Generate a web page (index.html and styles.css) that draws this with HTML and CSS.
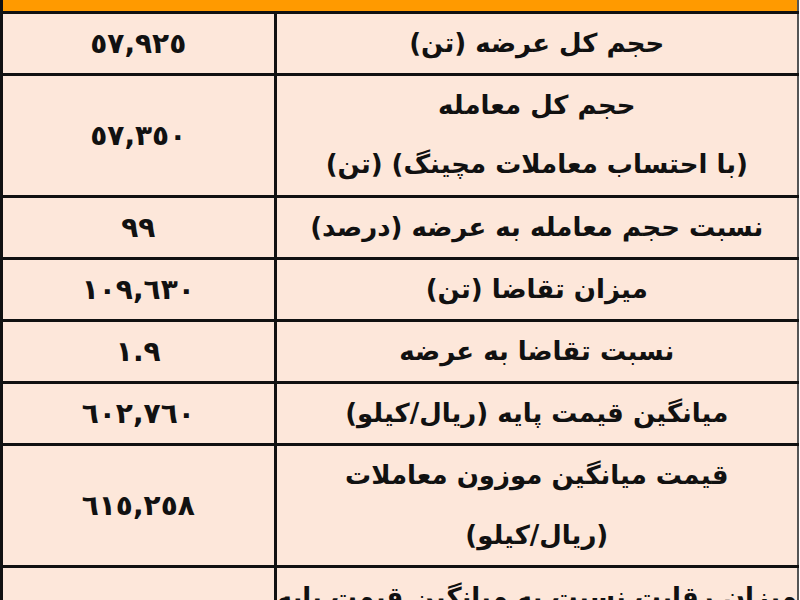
FILE: index.html
```html
<!DOCTYPE html>
<html lang="fa">
<head>
<meta charset="utf-8">
<link rel="stylesheet" href="styles.css">
</head>
<body>
<div class="page">
<table class="stats" dir="rtl">
  <thead>
    <tr class="head"><th class="label"></th><th class="value"></th></tr>
  </thead>
  <tbody>
    <tr><td class="label">حجم کل عرضه (تن)</td><td class="value">٥٧,٩٢٥</td></tr>
    <tr><td class="label">حجم کل معامله<br>(با احتساب معاملات مچینگ) (تن)</td><td class="value">٥٧,٣٥٠</td></tr>
    <tr><td class="label">نسبت حجم معامله به عرضه (درصد)</td><td class="value">٩٩</td></tr>
    <tr><td class="label">میزان تقاضا (تن)</td><td class="value">١٠٩,٦٣٠</td></tr>
    <tr><td class="label">نسبت تقاضا به عرضه</td><td class="value">١.٩</td></tr>
    <tr><td class="label">میانگین قیمت پایه (ریال/کیلو)</td><td class="value">٦٠٢,٧٦٠</td></tr>
    <tr><td class="label">قیمت میانگین موزون معاملات<br>(ریال/کیلو)</td><td class="value">٦١٥,٢٥٨</td></tr>
    <tr><td class="label">میزان رقابت نسبت به میانگین قیمت پایه<br>(درصد)</td><td class="value">٢</td></tr>
  </tbody>
</table>
</div>
</body>
</html>
```

FILE: styles.css
```css
html, body {
  margin: 0;
  padding: 0;
  background: #ffffff;
}
.page {
  width: 800px;
  height: 600px;
  overflow: hidden;
}
.stats {
  width: 799px;
  border-collapse: collapse;
  table-layout: fixed;
  font-family: "DejaVu Sans", sans-serif;
  font-weight: bold;
  font-size: 26px;
  color: #111;
  background: #fde7da;
  border-left: 3px solid #111;
  border-right: 2px solid #555;
}
.stats .head th {
  background: #ff9a00;
  height: 11px;
  padding: 0;
  border: none;
  border-bottom: 3px solid #111;
}
.stats td {
  border: 3px solid #111;
  text-align: center;
  vertical-align: middle;
  padding: 0;
  line-height: 59.2px;
}
.stats td.label {
  width: 522px;
  border-right: none;
}
.stats td.value {
  width: 270px;
  border-left: none;
  font-size: 28px;
}
.stats .head th.label {
  width: 522px;
}
```
